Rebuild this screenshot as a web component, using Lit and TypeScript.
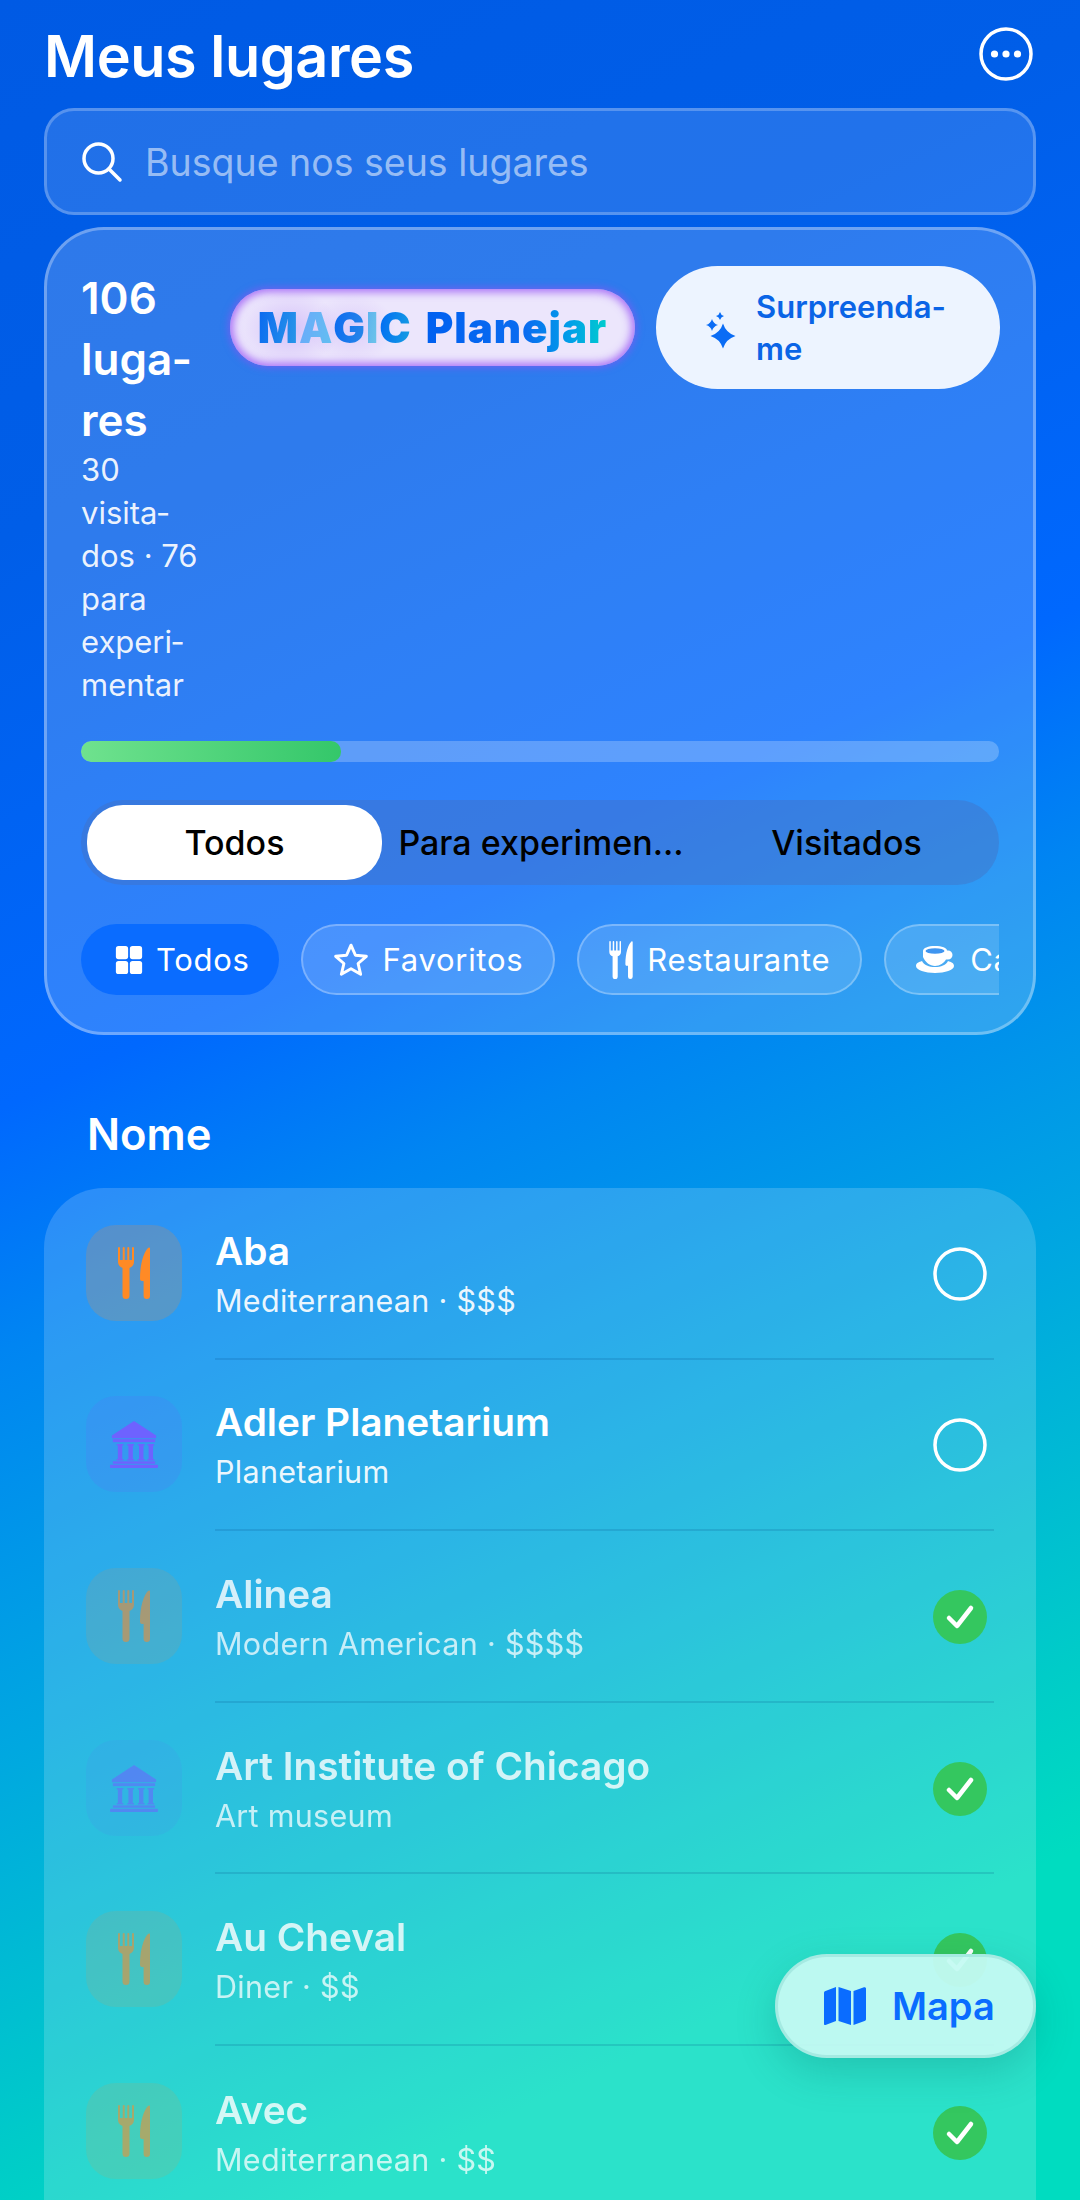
import { LitElement, css, html, svg } from 'lit'
import { customElement } from 'lit/decorators.js'

const fork = svg`<path d="M0 1a1 1 0 0 1 2 0v12h2.700V1a1 1 0 0 1 2 0v12h2.600V1a1 1 0 0 1 2 0v12H14V1a1 1 0 0 1 2 0v14c0 3-2 5-4.500 6v27.500a3.500 3.500 0 0 1-7 0V21C2 20 0 18 0 15z"/>
  <path d="M32 1.500V48.800a3.200 3.200 0 0 1-6.400 0V34H24c-1.500 0-2-1-2-2.500C22 16 26 5 30 1c1-1 2-.5 2 .5z"/>`

const museum = svg`<path d="M26 1 49 16v3H3v-3z"/><rect x="4" y="20" width="44" height="3"/>
  <path d="M8 25h7v1.500h-1.200v14h1.200V42H8v-1.500h1.200v-14H8zM19 25h7v1.500h-1.200v14H26V42h-7v-1.500h1.200v-14H19zM30 25h7v1.500h-1.200v14H37V42h-7v-1.500h1.200v-14H30zM40 25h7v1.500h-1.200v14H47V42h-7v-1.500h1.200v-14H40z"/>
  <rect x="4" y="43" width="44" height="2.500"/><rect x="1" y="46.500" width="50" height="3.500" rx="1"/>`

const rows = [
  { name: 'Aba', sub: 'Mediterranean · $$$', icon: 'food', done: false },
  { name: 'Adler Planetarium', sub: 'Planetarium', icon: 'museum', done: false },
  { name: 'Alinea', sub: 'Modern American · $$$$', icon: 'food', done: true },
  { name: 'Art Institute of Chicago', sub: 'Art museum', icon: 'museum', done: true },
  { name: 'Au Cheval', sub: 'Diner · $$', icon: 'food', done: true },
  { name: 'Avec', sub: 'Mediterranean · $$', icon: 'food', done: true },
]

@customElement('app-root')
export class AppRoot extends LitElement {
  static styles = css`
    :host {
      display: block;
      position: relative;
      width: 1080px;
      height: 2200px;
      overflow: hidden;
      box-sizing: border-box;
      padding: 0 44px;
      font-family: Inter, 'Liberation Sans', sans-serif;
      color: #fff;
      background: linear-gradient(155deg, #005ae4 0%, #005ee8 20%, #0068fe 41%, #0085f2 50%, #00a8e0 65%, #00ccc8 80%, #00dcc0 87%, #00dcc0 100%);
    }
    * { box-sizing: border-box; }
    .top {
      display: flex;
      align-items: center;
      justify-content: space-between;
      height: 108px;
      padding: 4px 3px 0 0;
    }
    h1 { margin: 0; font-size: 57.500px; font-weight: 600; letter-spacing: -0.4px; }
    .more { width: 54px; height: 54px; display: block; margin-top: -4px; }
    .search {
      height: 107px;
      display: flex;
      align-items: center;
      gap: 22px;
      padding: 2px 0 0 34px;
      border-radius: 30px;
      background: rgba(255,255,255,.13);
      border: 3px solid rgba(255,255,255,.24);
      font-size: 37.500px;
      color: rgba(255,255,255,.55);
    }
    .search svg { width: 42px; height: 42px; flex: none; margin-top: -2px; }
    .card {
      margin-top: 12px;
      height: 808px;
      padding: 36px 34px 0;
      border-radius: 60px;
      background: rgba(255,255,255,.18);
      border: 3px solid rgba(255,255,255,.3);
    }
    .head { display: flex; align-items: flex-start; height: 475px; }
    .stats { width: 120px; flex: none; hyphens: manual; }
    .count { font-size: 44px; line-height: 61px; font-weight: 600; margin-top: 2px; }
    .detail { font-size: 31px; line-height: 43px; margin-top: -3px; color: rgba(255,255,255,.92); }
    .magic {
      margin: 23px 0 0 29px;
      width: 405px;
      height: 77px;
      flex: none;
      display: flex;
      align-items: center;
      justify-content: center;
      gap: 14px;
      border-radius: 39px;
      background:
        radial-gradient(ellipse 50px 38px at 60px 40px, rgba(185,150,245,.45), transparent),
        radial-gradient(ellipse 44px 34px at 122px 40px, rgba(185,150,245,.3), transparent),
        #ece6fc;
      box-shadow: inset 0 0 8px 3px rgba(150,80,245,.8), 0 0 7px 2px rgba(150,80,245,.55);
      font-size: 42px;
      font-weight: 900;
      letter-spacing: 1px;
    }
    .magic span { display: flex; }
    .magic b {
      font-weight: 900;
      -webkit-background-clip: text;
      background-clip: text;
      color: transparent;
    }
    .magic .m { background-image: linear-gradient(100deg, #0a68f0, #2a9ae8); }
    .magic .a { background-image: linear-gradient(100deg, #6aa8fb, #62c0f0); }
    .magic .g { background-image: linear-gradient(100deg, #0a68f0, #2a8ae8); }
    .magic .i { background-image: linear-gradient(100deg, #5ab0f0, #70c8e8); }
    .magic .c { background-image: linear-gradient(100deg, #0068f5, #18a4e0); }
    .word {
      background: linear-gradient(90deg, #0060f0 0%, #0a6cf0 55%, #00a0e8 80%, #00cdcd 100%);
      -webkit-background-clip: text;
      background-clip: text;
      color: transparent;
    }
    .surprise {
      margin-left: 21px;
      width: 344px;
      height: 123px;
      flex: none;
      display: flex;
      align-items: center;
      gap: 20px;
      padding-left: 48px;
      border-radius: 62px;
      background: #edf4ff;
      color: #0a64e6;
      font-size: 31px;
      line-height: 42px;
      font-weight: 600;
    }
    .surprise div { width: 210px; }
    .surprise svg { width: 32px; height: 38px; flex: none; margin-top: 4px; color: #0a6cf5; }
    .bar {
      height: 21px;
      border-radius: 10px;
      background: rgba(255,255,255,.23);
      overflow: hidden;
    }
    .fill { height: 100%; border-radius: 10px; background: linear-gradient(90deg, #6fe28e, #34c76a); }
    .segment {
      margin-top: 38px;
      height: 85px;
      padding: 5px 6px;
      border-radius: 42px;
      background: rgba(70,110,190,.4);
      display: grid;
      grid-template-columns: 295px 318px 1fr;
      font-size: 34px;
      font-weight: 500;
      color: #000;
    }
    .segment div { display: flex; align-items: center; justify-content: center; }
    .segment .on { background: #fff; border-radius: 36px; }
    .chips {
      margin-top: 39px;
      display: flex;
      gap: 22px;
      overflow: hidden;
      height: 71px;
    }
    .chip {
      flex: none;
      display: flex;
      align-items: center;
      gap: 14px;
      height: 71px;
      padding: 0 30px;
      border-radius: 36px;
      background: rgba(255,255,255,.13);
      border: 2.500px solid rgba(255,255,255,.28);
      font-size: 31px;
      font-weight: 400;
      letter-spacing: .7px;
    }
    .chip.on { background: #0a6cff; border-color: transparent; gap: 13px; padding: 0 27px 0 32px; }
    .chip svg { flex: none; fill: #fff; }
    .i-grid { width: 28px; height: 30px; }
    .i-star { width: 36px; height: 36px; fill: none !important; stroke: #fff; stroke-width: 2.800; stroke-linejoin: round; }
    .i-fork { width: 24px; height: 38px; }
    .i-cup { width: 40px; height: 28px; }
    h2 {
      margin: 0;
      padding: 72px 0 0 43px;
      height: 153px;
      font-size: 43.500px;
      line-height: 54px;
      font-weight: 600;
    }
    .list {
      border-radius: 60px 60px 0 0;
      background: rgba(255,255,255,.17);
      height: 1040px;
      padding-left: 42px;
    }
    .row {
      height: 171.600px;
      display: flex;
      align-items: center;
    }
    .tile {
      width: 96px;
      height: 96px;
      border-radius: 30px;
      flex: none;
      margin-top: -2px;
      display: flex;
      align-items: center;
      justify-content: center;
    }
    .tile svg { width: 32px; height: 52px; }
    .tile.museum svg { width: 50px; height: 50px; margin-top: 2px; }
    .tile.food { background: rgba(255,140,40,.2); color: #ff8a25; }
    .tile.museum { background: rgba(110,90,255,.14); color: #6e62ff; }
    .done .tile { opacity: .58; }
    .body {
      flex: 1;
      height: 100%;
      margin-left: 33px;
      margin-right: 42px;
      display: flex;
      align-items: center;
      justify-content: space-between;
      padding: 3px 7px 0 0;
      border-bottom: 2px solid rgba(0,60,120,.15);
    }
    .row:last-child .body { border-bottom: none; }
    .name { font-size: 38.800px; line-height: 48px; font-weight: 600; }
    .sub { font-size: 30.500px; line-height: 42px; margin-top: 5px; letter-spacing: .3px; color: rgba(255,255,255,.92); }
    .done .name, .done .sub { opacity: .8; }
    .status { width: 54px; height: 54px; flex: none; margin-top: -1px; }
    .map {
      position: absolute;
      left: 775px;
      top: 1954px;
      width: 261px;
      height: 104px;
      display: flex;
      align-items: center;
      gap: 26px;
      padding-left: 46px;
      border-radius: 52px;
      background: rgba(196,250,242,.95);
      border: 3px solid rgba(160,230,222,.8);
      box-shadow: 0 14px 40px rgba(0,90,90,.22);
      color: #0a6cff;
      font-size: 38px;
      font-weight: 600;
    }
    .map svg { width: 42px; height: 40px; flex: none; fill: currentColor; }
  `

  private renderRow(r: (typeof rows)[number]) {
    return html`<div class="row ${r.done ? 'done' : ''}">
      <div class="tile ${r.icon}">
        ${r.icon === 'food'
          ? html`<svg viewBox="0 0 32 52" fill="currentColor">${fork}</svg>`
          : html`<svg viewBox="0 0 52 52" fill="currentColor">${museum}</svg>`}
      </div>
      <div class="body">
        <div>
          <div class="name">${r.name}</div>
          <div class="sub">${r.sub}</div>
        </div>
        ${r.done
          ? html`<svg class="status" viewBox="0 0 54 54"><circle cx="27" cy="27" r="27" fill="#34c75f"/><path d="M16 28l8 8 14-18" fill="none" stroke="#fff" stroke-width="4.500" stroke-linecap="round" stroke-linejoin="round"/></svg>`
          : html`<svg class="status" viewBox="0 0 54 54"><circle cx="27" cy="27" r="25" fill="none" stroke="#fff" stroke-width="3.500"/></svg>`}
      </div>
    </div>`
  }

  render() {
    return html`
      <div class="top">
        <h1>Meus lugares</h1>
        <svg class="more" viewBox="0 0 54 54" fill="#fff">
          <circle cx="27" cy="27" r="25" fill="none" stroke="#fff" stroke-width="3.500"/>
          <circle cx="15.500" cy="27" r="3.600"/><circle cx="27" cy="27" r="3.600"/><circle cx="38.500" cy="27" r="3.600"/>
        </svg>
      </div>
      <div class="search">
        <svg viewBox="0 0 42 42" fill="none" stroke="#fff" stroke-width="3.500" stroke-linecap="round"><circle cx="17.500" cy="17.500" r="14.500"/><path d="M28 28l11 11"/></svg>
        Busque nos seus lugares
      </div>
      <section class="card">
        <div class="head">
          <div class="stats">
            <div class="count">106 luga&shy;res</div>
            <div class="detail">30 visita&shy;dos · 76 para experi&shy;mentar</div>
          </div>
          <div class="magic">
            <span><b class="m">M</b><b class="a">A</b><b class="g">G</b><b class="i">I</b><b class="c">C</b></span>
            <span class="word">Planejar</span>
          </div>
          <div class="surprise">
            <svg viewBox="0 0 32 38" fill="currentColor">
              <path d="M19 12.500Q22 22 31.500 25 22 28 19 37.500 16 28 6.500 25 16 22 19 12.500z"/>
              <path d="M8 8Q9.300 12.700 14 14 9.300 15.300 8 20 6.700 15.300 2 14 6.700 12.700 8 8z"/>
              <path d="M16 1Q16.800 4.200 20 5 16.800 5.800 16 9 15.200 5.800 12 5 15.200 4.200 16 1z"/>
            </svg>
            <div>Surpreenda-me</div>
          </div>
        </div>
        <div class="bar"><div class="fill" style="width:28.300%"></div></div>
        <div class="segment">
          <div class="on">Todos</div>
          <div>Para experimen...</div>
          <div>Visitados</div>
        </div>
        <div class="chips">
          <div class="chip on">
            <svg class="i-grid" viewBox="0 0 32 34"><rect x="1" y="1" width="14" height="15" rx="3"/><rect x="17" y="1" width="14" height="15" rx="3"/><rect x="1" y="18" width="14" height="15" rx="3"/><rect x="17" y="18" width="14" height="15" rx="3"/></svg>
            Todos
          </div>
          <div class="chip">
            <svg class="i-star" viewBox="0 0 34 34"><path d="M17 3l4.200 9.500 10.300 1-7.800 6.800 2.400 10.200L17 25.200 7.900 30.500l2.400-10.200L2.500 13.500l10.300-1z"/></svg>
            Favoritos
          </div>
          <div class="chip">
            <svg class="i-fork" viewBox="0 0 32 52">${fork}</svg>
            Restaurante
          </div>
          <div class="chip">
            <svg class="i-cup" viewBox="0 0 40 28">
              <path d="M7 5c0-3 5-5 12-5s12 2 12 4.500h1a4.500 4.500 0 0 1 0 9h-2C28 17 24 20 19 20S9 16 7 11z"/>
              <path d="M0 20c0-3 3-4 6-5 2 4 7 6 13 6s11-2 13-6c3 1 6 2 6 5 0 4-9 7-19 7S0 24 0 20z"/>
              <ellipse cx="19" cy="5" rx="9.500" ry="2.800" fill="#3f95f0"/>
            </svg>
            Cafés
          </div>
        </div>
      </section>
      <h2>Nome</h2>
      <section class="list">${rows.map((r) => this.renderRow(r))}</section>
      <div class="map">
        <svg viewBox="0 0 42 40"><path d="M0 7c0-1 .5-1.700 1.500-2L12 1v34L1.500 39C.7 39.300 0 38.700 0 38zM14.500 1 27 5v34l-12.500-4zM29.500 5 40 1.300c1-.3 2 .3 2 1.300V33c0 1-.5 1.700-1.500 2l-11 4z"/></svg>
        Mapa
      </div>
    `
  }
}
